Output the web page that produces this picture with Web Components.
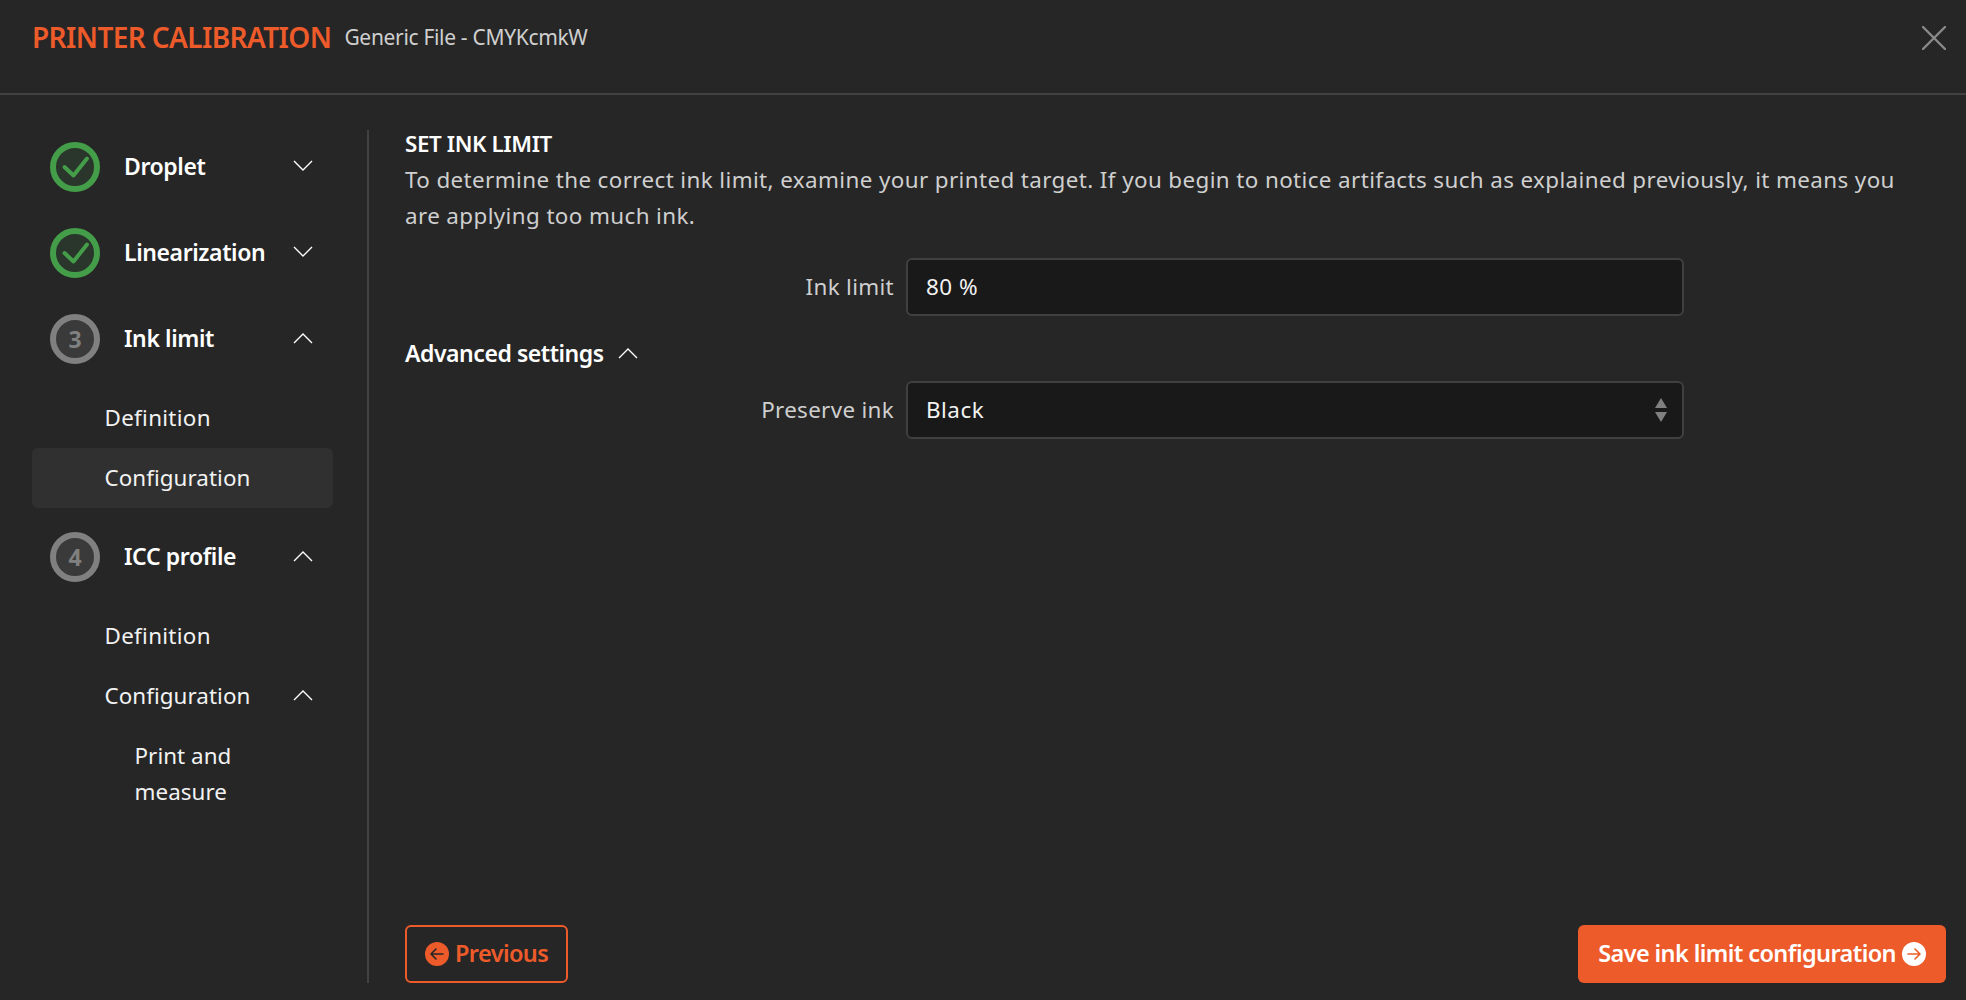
<!DOCTYPE html>
<html><head><meta charset="utf-8"><style>
html,body{margin:0;height:100%;background:#262626}
body{font-family:"Noto Sans","Open Sans",sans-serif;color:#fff;overflow:hidden}
</style></head><body>
<calib-app>
  <calib-header slot="header" title-text="PRINTER CALIBRATION" sub="Generic File - CMYKcmkW"></calib-header>
  <calib-sidebar slot="side">
    <calib-step state="done" label="Droplet"></calib-step>
    <calib-step state="done" label="Linearization"></calib-step>
    <calib-step num="3" label="Ink limit" open>
      <calib-sub style="--ls:.3px">Definition</calib-sub>
      <calib-sub active>Configuration</calib-sub>
    </calib-step>
    <calib-step num="4" label="ICC profile" open>
      <calib-sub style="--ls:.3px">Definition</calib-sub>
      <calib-sub chevron>Configuration</calib-sub>
      <calib-sub deep>Print and measure</calib-sub>
    </calib-step>
  </calib-sidebar>
  <calib-main slot="main"></calib-main>
</calib-app>
<script>
const CHEV = up => `<svg width="20" height="12" viewBox="0 0 20 12" fill="none" stroke="#fff" stroke-width="1.4"><path d="${up?'M1 11 10 2 19 11':'M1 1 10 10 19 1'}"/></svg>`;
const def = (n, html, init) => customElements.define(n, class extends HTMLElement{
  connectedCallback(){ if(this.shadowRoot) return; const r=this.attachShadow({mode:'open'}); r.innerHTML=typeof html==='function'?html(this):html; }
});
def('calib-app',`<style>
:host{display:flex;flex-direction:column;height:1000px;width:1966px;box-sizing:border-box}
.body{flex:1;display:flex;padding:35px 20px 17px 32px;min-height:0}
</style><slot name="header"></slot><div class="body"><slot name="side"></slot><slot name="main"></slot></div>`);
def('calib-header',h=>`<style>
:host{display:flex;align-items:flex-start;justify-content:space-between;height:93px;border-bottom:2px solid #424242;padding:0 20px 0 32px;box-sizing:content-box}
.l{display:flex;align-items:center;gap:13px;margin-top:18px}
.t{font-size:28px;line-height:38px;font-weight:600;color:#ee5b2b;letter-spacing:-.6px}
.s{font-size:21px;line-height:38px;color:#cfcfcf;letter-spacing:-.32px}
svg{margin-top:26px;display:block}
</style><div class="l"><span class="t">${h.getAttribute('title-text')}</span><span class="s">${h.getAttribute('sub')}</span></div>
<svg width="24" height="24" viewBox="0 0 24 24" stroke="#8a8a8a" stroke-width="2.4" stroke-linecap="round"><path d="M1 1 23 23M23 1 1 23"/></svg>`);
def('calib-sidebar',`<style>
:host{display:flex;flex-direction:column;gap:12px;flex:none;width:301px;padding-right:34px;border-right:2px solid #424242}
</style><slot></slot>`);
def('calib-step',h=>{
 const done=h.getAttribute('state')==='done', open=h.hasAttribute('open');
 const ic=done?`<svg width="50" height="50" viewBox="0 0 50 50" fill="none"><circle cx="25" cy="25" r="22" fill="#2a352b" stroke="#449d48" stroke-width="6"/><path d="M14.5 25 23.5 33.5 37 16.5" stroke="#449d48" stroke-width="4" stroke-linecap="round" stroke-linejoin="round"/></svg>`
 :`<div class="n">${h.getAttribute('num')}</div>`;
 return `<style>
:host{display:block}
.row{display:flex;align-items:center;height:74px;padding:0 20px 0 18px;box-sizing:border-box}
.ic{width:50px;height:50px;flex:none;margin-right:24px}
.n{width:50px;height:50px;box-sizing:border-box;border:6px solid #808080;border-radius:50%;background:#3a3a3a;color:#808080;font-weight:700;font-size:23px;display:flex;align-items:center;justify-content:center}
.lb{flex:1;font-size:23px;font-weight:600;letter-spacing:-.4px;padding-bottom:3px}
.row>svg{display:block;margin-top:-2px}
.ic svg{display:block}
.subs{display:${open?'flex':'none'};flex-direction:column;margin-top:12px}
</style><div class="row"><div class="ic">${ic}</div><div class="lb">${h.getAttribute('label')}</div>${CHEV(open)}</div><div class="subs"><slot></slot></div>`;});
def('calib-sub',h=>`<style>
:host{display:block}
.i{display:flex;align-items:flex-start;justify-content:space-between;padding:12px 20px 12px ${h.hasAttribute('deep')?102.5:72.5}px;box-sizing:border-box;border-radius:6px;line-height:36px;font-size:22.4px;letter-spacing:var(--ls,.05px);color:#f2f2f2;${h.hasAttribute('active')?'background:#303030;':''}}
.t{${h.hasAttribute('deep')?'max-width:130px;':''}}
svg{margin-top:11px;display:block}
</style><div class="i"><span class="t"><slot></slot></span>${h.hasAttribute('chevron')?CHEV(true):''}</div>`);
def('calib-field',h=>`<style>
:host{display:grid;grid-template-columns:489px 778px;column-gap:12px;align-items:center}
.l{text-align:right;font-size:22.4px;color:#cfcfcf;letter-spacing:.32px;padding-bottom:2px}
.f{height:58px;box-sizing:border-box;background:#191919;border:2px solid #404040;border-radius:6px;display:flex;align-items:center;justify-content:space-between;padding:0 15px 0 18px;font-size:22.4px;color:#f2f2f2;letter-spacing:.5px}
.f span{padding-bottom:2px}
svg{display:block}
</style><div class="l">${h.getAttribute('label')}</div><div class="f"><span>${h.getAttribute('value')}</span>${h.hasAttribute('select')?`<svg width="12" height="24" viewBox="0 0 12 24" fill="#808080"><path d="M6 0 12 10H0ZM0 14H12L6 24Z"/></svg>`:''}</div>`);
def('calib-btn',h=>{const p=h.hasAttribute('primary');
 const c=p?'#fff':'#ee5b2b', a=p?'#ee5b2b':'#262626';
 const ic=`<svg width="24" height="24" viewBox="0 0 24 24"><circle cx="12" cy="12" r="12" fill="${c}"/><path d="${p?'M6 12H18M13 7 18 12 13 17':'M18 12H6M11 7 6 12 11 17'}" fill="none" stroke="${a}" stroke-width="1.6" stroke-linecap="round" stroke-linejoin="round"/></svg>`;
 return `<style>
:host{display:inline-flex;align-items:center;gap:6px;height:58px;box-sizing:border-box;border-radius:6px;font-size:23.5px;font-weight:600;letter-spacing:-.6px;padding:0 ${p?20:18}px;color:${c};${p?'background:#ee5b2b;':'border:2px solid #ee5b2b;'}}
svg{display:block}
span{padding-bottom:3px}
</style>${p?'':ic}<span><slot></slot></span>${p?ic:''}`;});
def('calib-main',`<style>
:host{flex:1;min-width:0;display:flex;flex-direction:column;padding-left:36px}
h2{margin:0;font-size:22.4px;line-height:28px;font-weight:600;letter-spacing:-.4px}
p{margin:4px 0 0;padding-right:40px;font-size:22.4px;line-height:36px;color:#cfcfcf;letter-spacing:.39px}
calib-field.a{margin-top:24px}
.adv{display:flex;align-items:center;gap:14px;margin-top:20px;height:36px;font-size:23px;font-weight:600;letter-spacing:-.45px}
.adv span{padding-bottom:3px}
.adv svg{margin-top:-2px}
calib-field.b{margin-top:9px}
.foot{margin-top:auto;display:flex;justify-content:space-between;align-items:flex-end}
svg{display:block}
</style>
<h2>SET INK LIMIT</h2>
<p>To determine the correct ink limit, examine your printed target. If you begin to notice artifacts such as explained previously, it means you are applying too much ink.</p>
<calib-field class="a" label="Ink limit" value="80 %"></calib-field>
<div class="adv"><span>Advanced settings</span>${CHEV(true)}</div>
<calib-field class="b" label="Preserve ink" value="Black" select></calib-field>
<div class="foot"><calib-btn>Previous</calib-btn><calib-btn primary>Save ink limit configuration</calib-btn></div>`);
</script>
</body></html>
